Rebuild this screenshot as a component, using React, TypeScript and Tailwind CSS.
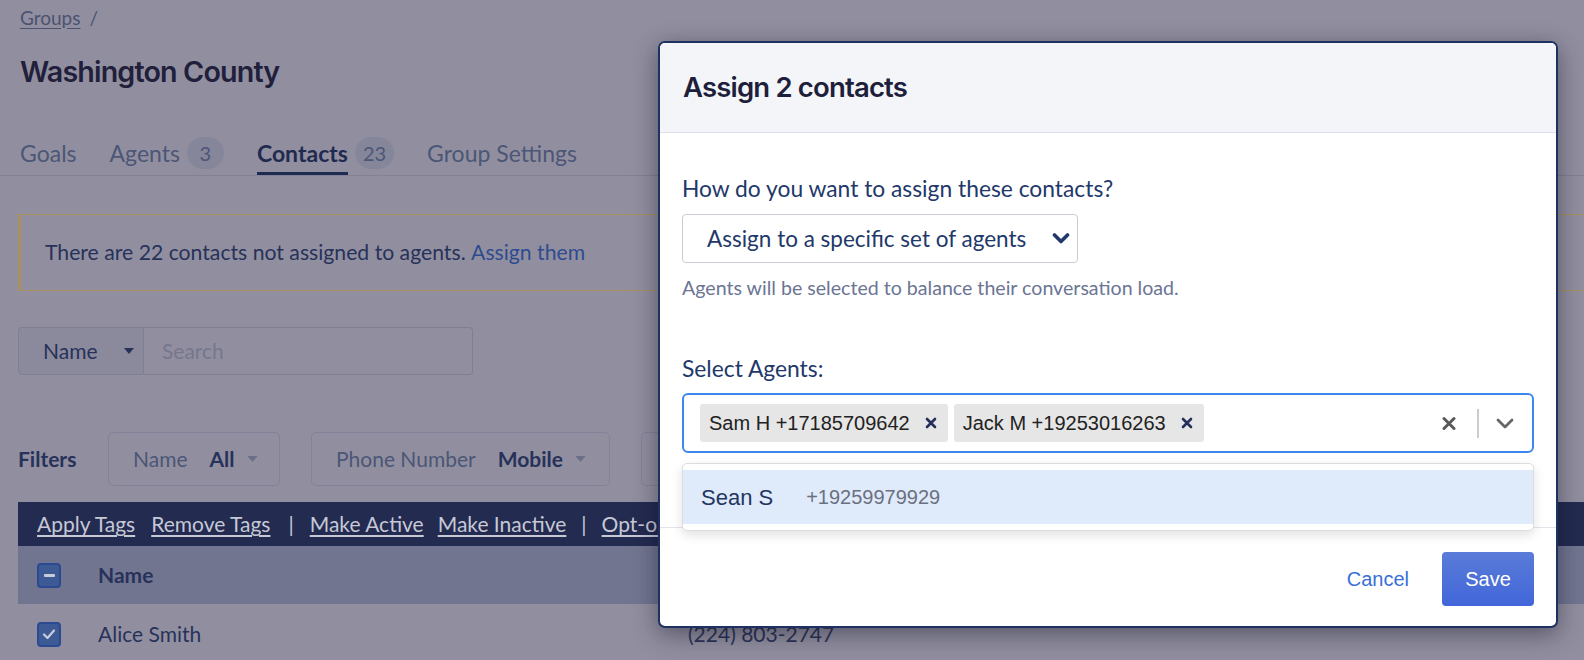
import React from "react";

function Caret({ color, w = 10, h = 6 }: { color: string; w?: number; h?: number }) {
  return (
    <svg width={w} height={h} viewBox="0 0 10 6">
      <polygon points="0,0 10,0 5,6" fill={color} />
    </svg>
  );
}

function Tab({ label, badge, active }: { label: string; badge?: string; active?: boolean }) {
  return (
    <div className="flex h-[38px]">
      <div
        className={
          active
            ? "flex items-center pb-[3px] border-b-[3px] border-[#1f2a50] font-bold text-[#1f2a50]"
            : "flex items-center pb-[3px] border-b-[3px] border-transparent text-[#4c5676]"
        }
      >
        {label}
      </div>
      {badge && (
        <div className="flex items-center pb-[6px] ml-[7px]">
          <span className="h-[32px] min-w-[37px] px-[8px] rounded-full bg-[#85869a] flex items-center justify-center text-[20px] text-[#4c5676] font-normal">
            {badge}
          </span>
        </div>
      )}
    </div>
  );
}

function Checkbox({ checked }: { checked?: boolean }) {
  return (
    <div className="w-[24px] h-[25px] rounded-[4px] bg-[#3d5a95] border-2 border-[#2b4a92] flex items-center justify-center">
      {checked ? (
        <svg width="14" height="12" viewBox="0 0 14 12">
          <polyline points="2,6.5 5.5,10 12,2.5" fill="none" stroke="#c9ccda" strokeWidth="2.2" strokeLinecap="round" strokeLinejoin="round" />
        </svg>
      ) : (
        <div className="w-[11px] h-[3px] rounded-[1px] bg-[#c9ccda]" />
      )}
    </div>
  );
}

function Chip({ text }: { text: string }) {
  return (
    <div className="flex items-center h-[38px] rounded-[3px] bg-[#e6e6e6]">
      <span className="pl-[9px] pr-[15px] text-[20px] text-[#222] font-['Liberation_Sans',Arial,sans-serif]">{text}</span>
      <svg width="12" height="12" viewBox="0 0 12 12" className="mr-[11px]">
        <path d="M2 2 L10 10 M10 2 L2 10" stroke="#22305a" strokeWidth="2.6" strokeLinecap="round" />
      </svg>
    </div>
  );
}

export default function App() {
  return (
    <div className="relative w-[1584px] h-[660px] overflow-hidden bg-[#918f9f] font-[Lato,sans-serif]">
      {/* background page */}
      <div className="h-[36px] flex items-center pl-[20px] text-[19px] text-[#4b5272]">
        <span className="underline underline-offset-[3px]">Groups</span>
        <span className="ml-[9px]">/</span>
      </div>
      <div className="h-[72px] flex items-center pl-[20px]">
        <h1 className="font-[Inter,sans-serif] font-semibold text-[28.7px] tracking-[-0.03em] text-[#211f3b]">
          Washington County
        </h1>
      </div>
      <div className="pt-[29px] border-b border-[#828297] flex pl-[20px] gap-[33px] text-[23px]">
        <Tab label="Goals" />
        <Tab label="Agents" badge="3" />
        <Tab label="Contacts" badge="23" active />
        <Tab label="Group Settings" />
      </div>

      <div className="pl-[18px]">
        <div className="mt-[38px] h-[77px] border-y border-l-[3px] border-[#a8915f] flex items-center pl-[24px] text-[21.2px] text-[#27325a]">
          There are 22 contacts not assigned to agents.&nbsp;<span className="text-[#2f4b8f]">Assign them</span>
        </div>

        <div className="mt-[36px] flex h-[48px] text-[21px]">
          <div className="w-[126px] bg-[#8b8a9c] border border-[#7f7f92] rounded-l-[4px] flex items-center justify-between pl-[24px] pr-[9px] text-[#27325a]">
            <span>Name</span>
            <Caret color="#27325a" />
          </div>
          <div className="w-[329px] border border-l-0 border-[#7f7f92] rounded-r-[4px] flex items-center pl-[18px] text-[#76768c]">
            Search
          </div>
        </div>

        <div className="mt-[57px] flex items-center h-[54px] text-[21px]">
          <div className="w-[90px] font-bold text-[#27325a]">Filters</div>
          <div className="w-[172px] h-[54px] border border-[#82829a] rounded-[5px] flex items-center pl-[24px]">
            <span className="text-[#4c5676]">Name</span>
            <span className="ml-[22px] font-bold text-[#27325a]">All</span>
            <span className="ml-[12px]"><Caret color="#6c6e85" w={11} /></span>
          </div>
          <div className="ml-[31px] w-[299px] h-[54px] border border-[#82829a] rounded-[5px] flex items-center pl-[24px]">
            <span className="text-[#4c5676]">Phone Number</span>
            <span className="ml-[22px] font-bold text-[#27325a]">Mobile</span>
            <span className="ml-[12px]"><Caret color="#6c6e85" w={11} /></span>
          </div>
          <div className="ml-[31px] w-[220px] h-[54px] border border-[#82829a] rounded-[5px] flex items-center pl-[25px]">
            <span className="text-[#4c5676]">Tags</span>
          </div>
        </div>

        <div className="mt-[16px] h-[44px] bg-[#232b50] flex items-center pl-[19px] text-[21px] text-[#c6c8d6]">
          <span className="underline underline-offset-[3px]">Apply Tags</span>
          <span className="ml-[16px] underline underline-offset-[3px]">Remove Tags</span>
          <span className="ml-[18px]">|</span>
          <span className="ml-[16px] underline underline-offset-[3px]">Make Active</span>
          <span className="ml-[14px] underline underline-offset-[3px]">Make Inactive</span>
          <span className="ml-[15px]">|</span>
          <span className="ml-[15px] underline underline-offset-[3px]">Opt-out</span>
        </div>

        <div className="h-[58px] bg-[#727590] flex items-center pl-[19px] text-[21px]">
          <Checkbox />
          <div className="ml-[37px] w-[590px] font-bold text-[#27325a]">Name</div>
          <div className="font-bold text-[#27325a]">Phone Number</div>
        </div>

        <div className="h-[60px] flex items-center pl-[19px] text-[21px] text-[#27325a]">
          <Checkbox checked />
          <div className="ml-[37px] w-[590px]">Alice Smith</div>
          <div className="text-[#2d3456]">(224) 803-2747</div>
        </div>
      </div>

      {/* modal */}
      <div className="absolute left-[658px] top-[41px] w-[900px] h-[587px] bg-white border-2 border-[#1e3262] rounded-[7px] shadow-[0_6px_24px_rgba(10,10,30,0.45)] flex flex-col">
        <div className="h-[90px] shrink-0 bg-[#f4f5f9] border-b border-[#dde0e8] rounded-t-[5px] flex items-center px-[23px]">
          <h2 className="font-[Inter,sans-serif] font-semibold text-[27.5px] tracking-[-0.03em] text-[#1d1f3b]">
            Assign 2 contacts
          </h2>
        </div>

        <div className="h-[394px] shrink-0 px-[22px] pt-[43px] text-[#22386a]">
          <div className="h-[24px] flex items-center text-[22.8px]">How do you want to assign these contacts?</div>
          <div className="mt-[14px] w-[396px] h-[49px] border border-[#c8ccd4] rounded-[4px] flex items-center justify-between pl-[24px] pr-[7px] text-[22.5px]">
            <span>Assign to a specific set of agents</span>
            <svg width="18" height="13" viewBox="0 0 18 13">
              <path d="M2.5 3 L9 9.5 L15.5 3" fill="none" stroke="#22386a" strokeWidth="3.6" strokeLinecap="round" strokeLinejoin="round" />
            </svg>
          </div>
          <div className="mt-[12px] h-[25px] flex items-center text-[19.6px] text-[#6b7594]">
            Agents will be selected to balance their conversation load.
          </div>
          <div className="mt-[56px] h-[24px] flex items-center text-[22.8px]">Select Agents:</div>

          <div className="relative mt-[13px]">
            <div className="h-[60px] border-2 border-[#3d87f0] rounded-[6px] flex items-center pl-[16px]">
              <div className="flex gap-[6px] flex-1">
                <Chip text="Sam H +17185709642" />
                <Chip text="Jack M +19253016263" />
              </div>
              <svg width="14" height="15" viewBox="0 0 14 15">
                <path d="M2 2.5 L12 12.5 M12 2.5 L2 12.5" stroke="#595959" strokeWidth="3" strokeLinecap="round" />
              </svg>
              <div className="ml-[21px] w-[2px] h-[29px] bg-[#cccccc]" />
              <svg width="18" height="11" viewBox="0 0 18 11" className="ml-[17px] mr-[18px]">
                <path d="M2 2 L9 9 L16 2" fill="none" stroke="#666666" strokeWidth="2.8" strokeLinecap="round" strokeLinejoin="round" />
              </svg>
            </div>

            <div className="absolute left-0 right-0 top-[70px] z-10 bg-white border border-[#dcdcdc] rounded-[5px] shadow-[0_4px_12px_rgba(0,0,0,0.12)] py-[6px]">
              <div className="h-[54px] bg-[#dfeafb] flex items-center pl-[18px] font-['Liberation_Sans',Arial,sans-serif]">
                <span className="text-[22px] text-[#24365f]">Sean S</span>
                <span className="ml-[33px] text-[20px] text-[#6b7080]">+19259979929</span>
              </div>
            </div>
          </div>
        </div>

        <div className="flex-1 border-t border-[#e2e4ea] flex items-start justify-end pt-[24px] pr-[22px] font-['Liberation_Sans',Arial,sans-serif]">
          <div className="h-[54px] flex items-center mr-[33px] text-[20px] text-[#3a6fd8]">Cancel</div>
          <div className="w-[92px] h-[54px] rounded-[4px] bg-linear-to-b from-[#5a7bd8] to-[#4266d9] flex items-center justify-center text-[20px] text-white">
            Save
          </div>
        </div>
      </div>
    </div>
  );
}
